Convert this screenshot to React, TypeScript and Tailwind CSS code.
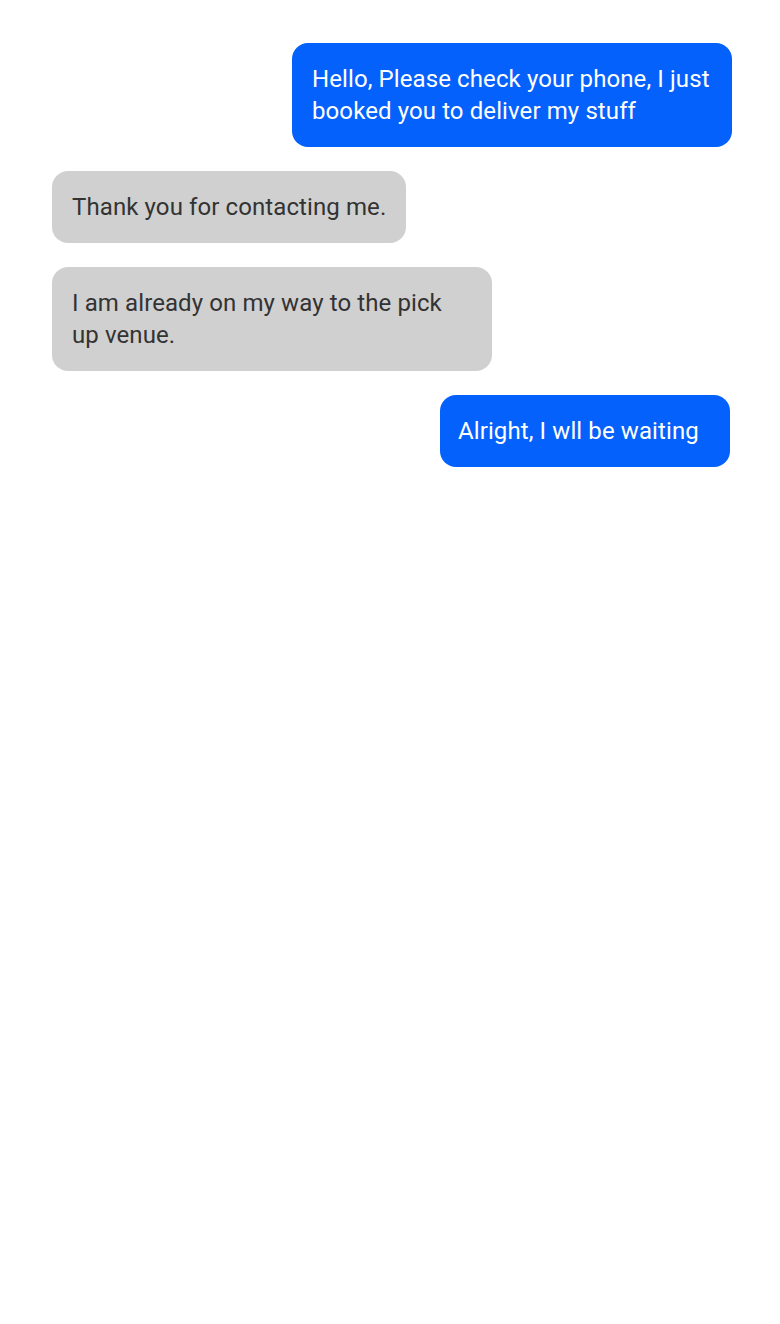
const messages = [
	{ id: 1, mine: true, text: 'Hello, Please check your phone, I just booked you to deliver my stuff' },
	{ id: 2, mine: false, text: 'Thank you for contacting me.' },
	{ id: 3, mine: false, text: 'I am already on my way to the pick up venue.' },
	{ id: 4, mine: true, text: 'Alright, I wll be waiting', last: true },
]

export default function App() {
	return (
		<main className="min-h-[1324px] bg-white font-['Roboto',sans-serif]">
			<div className="flex flex-col gap-6 pt-[43px] pl-[52px] pr-[48px]">
				{messages.map(msg => (
					<div key={msg.id} className={msg.mine ? 'flex justify-end' : 'flex justify-start'}>
						{msg.last ? (
							<p className="mr-[2px] w-[290px] rounded-2xl bg-[#0561fc] py-5 pl-[18px] pr-5 text-[24px] leading-8 tracking-[0.1px] text-white">
								{msg.text}
							</p>
						) : (
							<p
								className={
									msg.mine
										? 'max-w-[440px] rounded-2xl bg-[#0561fc] px-5 py-5 text-[24px] leading-8 tracking-[0.1px] text-white'
										: 'max-w-[440px] rounded-2xl bg-[#d0d0d0] px-5 py-5 text-[24px] leading-8 tracking-[0.1px] text-[#333333]'
								}
							>
								{msg.text}
							</p>
						)}
					</div>
				))}
			</div>
		</main>
	)
}
